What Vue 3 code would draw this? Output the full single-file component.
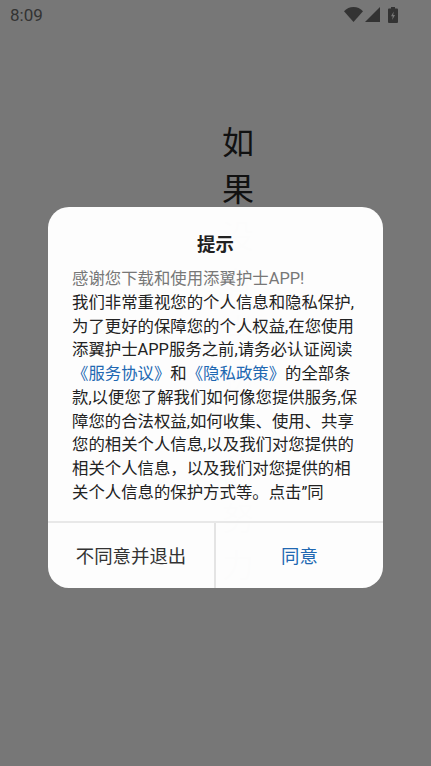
<script setup>
const lines = [
  '我们非常重视您的个人信息和隐私保护,',
  '为了更好的保障您的个人权益,在您使用',
  '添翼护士APP服务之前,请务必认证阅读'
]
const rest = [
  '款,以便您了解我们如何像您提供服务,保',
  '障您的合法权益,如何收集、使用、共享',
  '您的相关个人信息,以及我们对您提供的',
  '相关个人信息，以及我们对您提供的相',
  '关个人信息的保护方式等。点击”同'
]
const ghost = '如果没有当初你的努力'.split('')
</script>

<template>
  <div class="page">
    <header class="status">
      <span class="time">8:09</span>
      <div class="icons">
        <svg class="wifi" width="19" height="15" viewBox="0 0 19 15"><path d="M0 4.200C2.500 1.600 5.800 0 9.500 0s7 1.600 9.500 4.200L9.500 15z" fill="#333"/></svg>
        <svg class="signal" width="15" height="15" viewBox="0 0 15 15"><path d="M15 0v15H0z" fill="#333"/></svg>
        <svg class="battery" width="10" height="16" viewBox="0 0 10 16"><path d="M3 0h4v1.500h2a1 1 0 0 1 1 1V15a1 1 0 0 1-1 1H1a1 1 0 0 1-1-1V2.500a1 1 0 0 1 1-1h2z" fill="#333"/><path d="M5.700 4.500 3 9.300h1.700L4.200 13l2.800-5.100H5.200z" fill="#777"/></svg>
      </div>
    </header>
    <div class="ghost">
      <span v-for="(c, i) in ghost" :key="i">{{ c }}</span>
    </div>
    <section class="dialog">
      <h2 class="title">提示</h2>
      <div class="body">
        <div class="intro">感谢您下载和使用添翼护士APP!</div>
        <div v-for="l in lines" :key="l">{{ l }}</div>
        <div><a class="link">《服务协议》</a>和<a class="link">《隐私政策》</a>的全部条</div>
        <div v-for="l in rest" :key="l">{{ l }}</div>
      </div>
      <footer class="actions">
        <button class="btn first">不同意并退出</button>
        <button class="btn agree">同意</button>
      </footer>
    </section>
  </div>
</template>

<style scoped>
.page {
  position: relative;
  width: 431px;
  height: 766px;
  overflow: hidden;
  background: #777777;
  font-family: Roboto, "Noto Sans CJK SC", sans-serif;
}
.status {
  height: 29px;
  display: flex;
  align-items: center;
  justify-content: space-between;
  padding: 0 33px 0 10px;
}
.time {
  font-size: 17px;
  color: #333;
}
.icons {
  display: flex;
  align-items: center;
  gap: 2px;
}
.battery {
  margin-left: 6px;
}
.ghost {
  display: flex;
  flex-direction: column;
  align-items: center;
  width: 34px;
  margin: 91px 0 0 221px;
  font-size: 32px;
  line-height: 47px;
  color: #111;
}
.dialog {
  position: absolute;
  left: 48px;
  top: 207px;
  width: 335px;
  height: 381px;
  display: flex;
  flex-direction: column;
  background: rgba(255, 255, 255, 0.99);
  border-radius: 21px;
  overflow: hidden;
}
.title {
  margin: 0;
  padding-top: 24px;
  text-align: center;
  font-size: 18.400px;
  line-height: 27px;
  font-weight: 700;
  color: #222;
}
.body {
  margin-top: 9px;
  padding-left: 24px;
  font-size: 16.400px;
  line-height: 23.750px;
  color: #222;
  white-space: nowrap;
  flex: 1;
}
.intro {
  color: #777;
}
.link {
  color: #2168b2;
}
.actions {
  display: flex;
  height: 65px;
  border-top: 2px solid #e8e8e8;
}
.btn {
  padding: 0 0 2px;
  border: 0;
  background: transparent;
  font: inherit;
  font-size: 18.400px;
  color: #333;
}
.first {
  width: 166px;
}
.agree {
  flex: 1;
  border-left: 2px solid #e4e4e4;
  color: #2168b2;
}
</style>
